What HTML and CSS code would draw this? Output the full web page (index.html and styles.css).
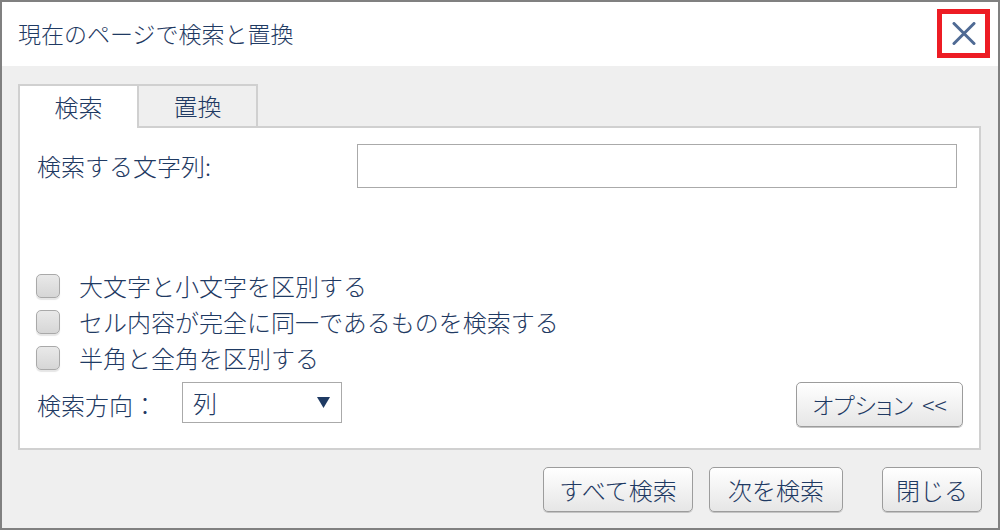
FILE: index.html
```html
<!DOCTYPE html>
<html lang="ja">
<head>
    <meta charset="UTF-8">
    <meta name="viewport" content="width=device-width, initial-scale=1.0">
    <title>現在のページで検索と置換</title>
    <link rel="stylesheet" href="styles.css">
</head>
<body>
    <div class="dialog">
        <div class="titlebar">
            <span class="title">現在のページで検索と置換</span>
            <button class="close" type="button" aria-label="閉じる">
                <svg width="24" height="23" viewBox="0 0 24 23">
                    <path d="M2 1.5 L22 21.5 M22 1.5 L2 21.5" stroke="#4f6a94" stroke-width="3" stroke-linecap="round" fill="none"/>
                </svg>
            </button>
        </div>

        <div class="content">
            <div class="tabs">
                <div class="tab active">検索</div>
                <div class="tab">置換</div>
            </div>

            <div class="panel">
                <div class="find-row">
                    <label for="findText">検索する文字列:</label>
                    <input type="text" id="findText">
                </div>

                <div class="options">
                    <label class="check"><input type="checkbox"><span>大文字と小文字を区別する</span></label>
                    <label class="check"><input type="checkbox"><span>セル内容が完全に同一であるものを検索する</span></label>
                    <label class="check"><input type="checkbox"><span>半角と全角を区別する</span></label>
                </div>

                <div class="direction-row">
                    <span class="dir-label">検索方向：</span>
                    <div class="select">
                        <span>列</span>
                        <svg width="13" height="11" viewBox="0 0 13 11"><path d="M0 0 H13 L6.5 11 Z" fill="#1f3a63"/></svg>
                    </div>
                    <button class="btn btn-option" type="button">オプション &lt;&lt;</button>
                </div>
            </div>

            <div class="actions">
                <button class="btn btn-all" type="button">すべて検索</button>
                <button class="btn btn-next" type="button">次を検索</button>
                <button class="btn btn-close" type="button">閉じる</button>
            </div>
        </div>
    </div>
</body>
</html>
```

FILE: styles.css
```css
body {
    margin: 0;
    padding: 0;
    font-family: "Noto Sans CJK JP", "Noto Sans", sans-serif;
    font-weight: 300;
    color: #1f3a63;
}
.dialog {
    width: 1000px;
    height: 530px;
    box-sizing: border-box;
    border: 2px solid #808080;
    background-color: #efefef;
    display: flex;
    flex-direction: column;
}
.titlebar {
    height: 64px;
    background-color: #fff;
    display: flex;
    align-items: center;
    justify-content: space-between;
    padding-left: 16px;
    padding-right: 8px;
}
.title {
    font-size: 23px;
    line-height: 1;
    margin-top: -2px;
}
.close {
    width: 53px;
    height: 49px;
    box-sizing: border-box;
    border: 5px solid #ed1c24;
    background: #fff;
    padding: 0;
    display: flex;
    align-items: center;
    justify-content: center;
    margin-top: -1px;
}
.content {
    padding: 18px 17px 0 16px;
}
.tabs {
    display: flex;
    margin-bottom: -2px;
}
.tab {
    width: 117px;
    height: 42px;
    border: 2px solid #d0d0d0;
    border-bottom: none;
    font-size: 24px;
    line-height: 42px;
    text-align: center;
    background-color: #efefef;
}
.tab + .tab {
    border-left: none;
    height: 40px;
    border-bottom: 2px solid #d0d0d0;
    line-height: 40px;
}
.tab.active {
    background-color: #fff;
    position: relative;
    z-index: 1;
}
.panel {
    border: 2px solid #d0d0d0;
    background-color: #fff;
    padding: 16px 16px 21px 16px;
    width: 927px;
}
.find-row {
    display: flex;
    align-items: center;
    justify-content: space-between;
    padding-right: 6px;
}
.find-row label {
    font-size: 24px;
    padding-left: 1px;
    margin-top: -2px;
}
.find-row input {
    width: 600px;
    height: 44px;
    box-sizing: border-box;
    border: 1px solid #aaa;
    outline: none;
}
.options {
    margin-top: 86px;
    display: flex;
    flex-direction: column;
    gap: 12px;
}
.check {
    display: flex;
    align-items: center;
    height: 24px;
    font-size: 24px;
}
.check span {
    margin-top: -2px;
}
.check input {
    appearance: none;
    -webkit-appearance: none;
    width: 24px;
    height: 24px;
    margin: 0 19px 0 0;
    box-sizing: border-box;
    border: 1px solid #a9a9a9;
    border-radius: 5px;
    background: linear-gradient(#e9e9e9, #d6d6d6);
    box-shadow: 0 2px 1px #e6e6e6;
}
.direction-row {
    display: flex;
    align-items: center;
    height: 45px;
    margin-top: 12px;
}
.dir-label {
    font-size: 24px;
    padding-left: 1px;
    width: 145px;
}
.select {
    width: 160px;
    height: 41px;
    box-sizing: border-box;
    border: 1px solid #aaa;
    display: flex;
    align-items: center;
    justify-content: space-between;
    padding: 0 11px 0 10px;
    font-size: 24px;
    align-self: flex-start;
}
.btn {
    font-family: inherit;
    font-weight: 300;
    color: #1f3a63;
    font-size: 24px;
    height: 45px;
    box-sizing: border-box;
    border: 1px solid #9c9c9c;
    border-radius: 5px;
    background: linear-gradient(#ffffff, #e6e6e6);
    box-shadow: 0 1px 0 #c4c4c4;
    padding: 0;
    line-height: 1;
}
.btn-option {
    width: 167px;
    margin-left: auto;
    font-size: 23px;
    font-feature-settings: "palt";
    word-spacing: 4px;
}
.actions {
    display: flex;
    justify-content: flex-end;
    margin-top: 17px;
    margin-right: -1px;
}
.btn-all {
    width: 150px;
}
.btn-next {
    width: 134px;
    margin-left: 16px;
}
.btn-close {
    width: 100px;
    margin-left: 39px;
}
```
